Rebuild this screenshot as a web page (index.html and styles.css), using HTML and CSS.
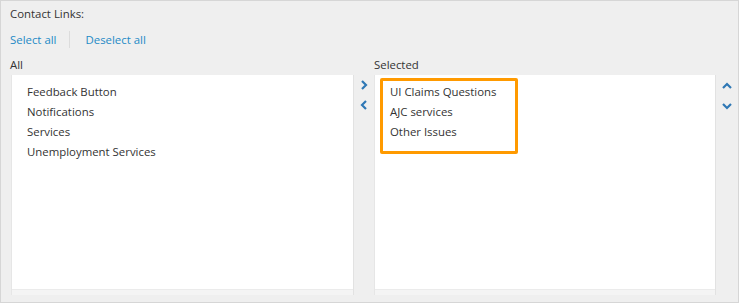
FILE: index.html
```html
<!DOCTYPE html>
<html>
<head>
<meta charset="utf-8">
<link rel="stylesheet" href="styles.css">
</head>
<body>
<div class="panel">
  <div class="title">Contact Links:</div>
  <div class="links">
    <a class="link">Select all</a>
    <span class="sep"></span>
    <a class="link">Deselect all</a>
  </div>
  <div class="lists">
    <div class="col">
      <div class="col-label">All</div>
      <div class="box">
        <ul class="items">
          <li>Feedback Button</li>
          <li>Notifications</li>
          <li>Services</li>
          <li>Unemployment Services</li>
        </ul>
        <div class="strip"></div>
      </div>
    </div>
    <div class="movers">
      <svg class="chev" width="10" height="12" viewBox="0 0 10 12"><path d="M3 2 L7 6 L3 10" fill="none" stroke="#2f78b5" stroke-width="2.2"/></svg>
      <svg class="chev" width="10" height="12" viewBox="0 0 10 12"><path d="M7 2 L3 6 L7 10" fill="none" stroke="#2f78b5" stroke-width="2.2"/></svg>
    </div>
    <div class="col">
      <div class="col-label">Selected</div>
      <div class="box">
        <ul class="items highlight">
          <li>UI Claims Questions</li>
          <li>AJC services</li>
          <li>Other Issues</li>
        </ul>
        <div class="strip"></div>
      </div>
    </div>
    <div class="movers order">
      <svg class="chev" width="12" height="10" viewBox="0 0 12 10"><path d="M2 7 L6 3 L10 7" fill="none" stroke="#2f78b5" stroke-width="2.2"/></svg>
      <svg class="chev" width="12" height="10" viewBox="0 0 12 10"><path d="M2 3 L6 7 L10 3" fill="none" stroke="#2f78b5" stroke-width="2.2"/></svg>
    </div>
  </div>
</div>
</body>
</html>
```

FILE: styles.css
```css
html, body {
  margin: 0;
  padding: 0;
  background: #ffffff;
}
body {
  font-family: "Open Sans", "Liberation Sans", sans-serif;
  font-size: 11.4px;
  color: #333333;
}
.panel {
  box-sizing: border-box;
  width: 739px;
  height: 303px;
  border: 1px solid #d6d6d6;
  background: #efefef;
  padding: 4px 0 0 9px;
}
.title {
  line-height: 18px;
  height: 18px;
}
.links {
  display: flex;
  align-items: center;
  margin-top: 7px;
  height: 18px;
}
.link {
  color: #1d8ac6;
  cursor: pointer;
}
.sep {
  width: 1px;
  height: 17px;
  background: #dcdcdc;
  margin: 0 15px 0 13px;
}
.lists {
  display: flex;
  margin-top: 9px;
}
.col {
  display: flex;
  flex-direction: column;
}
.col-label {
  line-height: 16px;
  height: 16px;
  margin-bottom: 2px;
}
.col:first-child .box {
  width: 343px;
  margin-left: 1px;
}
.col:nth-child(3) .box {
  width: 342px;
}
.box {
  box-sizing: border-box;
  height: 220px;
  background: #ffffff;
  border-left: 1px solid #e6e6e6;
  border-right: 1px solid #e2e2e2;
  display: flex;
  flex-direction: column;
}
.items {
  list-style: none;
  margin: 5px 0 0 0;
  padding: 2px 0 4px 15px;
  flex: 1;
}
.items li {
  line-height: 20px;
  height: 20px;
  white-space: nowrap;
}
.items.highlight {
  box-sizing: border-box;
  flex: none;
  align-self: flex-start;
  margin: 3px 0 0 5px;
  padding: 1px 0 0 7px;
  border: 3px solid #ff9a00;
  border-radius: 2px;
  width: 138px;
  height: 76px;
}
.strip {
  margin-top: auto;
  height: 5px;
  background: #f4f4f4;
  border-top: 1px solid #ebebeb;
}
.movers {
  width: 20px;
  padding-top: 22px;
  display: flex;
  flex-direction: column;
  align-items: center;
  gap: 8px;
}
.order {
  width: 22px;
  gap: 10px;
  padding-top: 24px;
}
.chev {
  display: block;
}
```
